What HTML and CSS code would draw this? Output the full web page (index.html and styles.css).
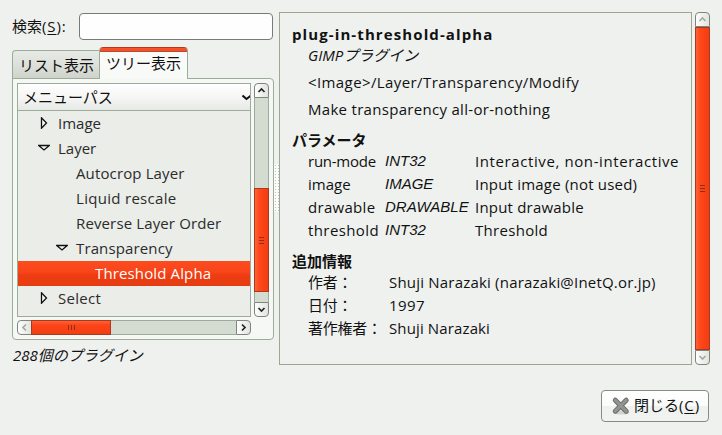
FILE: index.html
```html
<!DOCTYPE html>
<html lang="ja">
<head>
<meta charset="utf-8">
<title>プラグインブラウザ</title>
<link rel="stylesheet" href="styles.css">
</head>
<body>
<main class="panes">
  <section class="left">
    <div class="search"><label for="q">検索<span class="key">(<u>S</u>):</span></label><input id="q" type="text"></div>
    <div class="tabs"><div class="tab">リスト表示</div><div class="tab active">ツリー表示</div></div>
    <div class="page">
      <div class="tree">
        <div class="tree-head"><span>メニューパス</span><svg width="9" height="8"><path d="M0.5 2.5L4.5 6L9 2.5" fill="none" stroke="#111" stroke-width="2"/></svg></div>
        <div class="row l1"><svg width="12" height="12"><path d="M3.5 .8V11.2L8.5 6Z"/></svg><span>Image</span></div>
        <div class="row l1"><svg width="12" height="12"><path d="M.8 3.5H11.2L6 8Z"/></svg><span>Layer</span></div>
        <div class="row l2"><span class="s1">Autocrop Layer</span></div>
        <div class="row l2"><span class="s3">Liquid rescale</span></div>
        <div class="row l2"><span class="s1">Reverse Layer Order</span></div>
        <div class="row l2b"><svg width="12" height="12"><path d="M.8 3.5H11.2L6 8Z"/></svg><span class="s1">Transparency</span></div>
        <div class="row l3 selected"><span class="s1">Threshold Alpha</span></div>
        <div class="row l1"><svg width="12" height="12"><path d="M3.5 .8V11.2L8.5 6Z"/></svg><span class="s3">Select</span></div>
      </div>
      <div class="vbar">
        <div class="btn up"><svg width="9" height="7"><path d="M1.5 5L4.5 2L7.5 5"/></svg></div>
        <div class="trough"><div class="thumb tree-thumb"><i class="grip"></i></div></div>
        <div class="btn down"><svg width="9" height="7"><path d="M1.5 2L4.5 5L7.5 2"/></svg></div>
      </div>
      <div class="hbar">
        <div class="btn prev off"><svg width="7" height="9"><path d="M5 1.5L2 4.5L5 7.5"/></svg></div>
        <div class="trough"><div class="thumb h-thumb"><i class="grip side"></i></div></div>
        <div class="btn next"><svg width="7" height="9"><path d="M2 1.5L5 4.5L2 7.5"/></svg></div>
      </div>
    </div>
    <div class="status">288個のプラグイン</div>
  </section>
  <div class="splitter"><i></i></div>
  <section class="details">
    <h1>plug-in-threshold-alpha</h1>
    <p class="kind">GIMPプラグイン</p>
    <p class="path s4">&lt;Image&gt;/Layer/Transparency/Modify</p>
    <p class="blurb s3">Make transparency all-or-nothing</p>
    <h2>パラメータ</h2>
    <div class="params">
      <span class="tight">run-mode</span><em>INT32</em><span class="s6">Interactive, non-interactive</span>
      <span>image</span><em>IMAGE</em><span class="s2">Input image (not used)</span>
      <span class="s3">drawable</span><em>DRAWABLE</em><span class="s2">Input drawable</span>
      <span class="s4">threshold</span><em>INT32</em><span class="s3">Threshold</span>
    </div>
    <h2 class="extra">追加情報</h2>
    <div class="info">
      <span class="tight">作者：</span><span class="s2">Shuji Narazaki (narazaki@InetQ.or.jp)</span>
      <span class="tight">日付：</span><span class="s4">1997</span>
      <span class="tight">著作権者：</span><span class="s1">Shuji Narazaki</span>
    </div>
  </section>
  <div class="vbar main-bar">
    <div class="btn up off"><svg width="9" height="7"><path d="M1.5 5L4.5 2L7.5 5"/></svg></div>
    <div class="trough"><div class="thumb full"><i class="grip"></i></div></div>
    <div class="btn down off"><svg width="9" height="7"><path d="M1.5 2L4.5 5L7.5 2"/></svg></div>
  </div>
</main>
<footer><button type="button"><svg width="20" height="20" viewBox="0 0 20 20"><ellipse cx="10.5" cy="16.5" rx="8" ry="2" fill="#000" opacity=".12"/><path d="M4.3 4.2L15.2 15.2M15.2 4.2L4.3 15.2" stroke="#666864" stroke-width="5" stroke-linecap="round"/><path d="M4.3 4.2L15.2 15.2M15.2 4.2L4.3 15.2" stroke="#929490" stroke-width="3.2" stroke-linecap="round"/></svg><span class="caption">閉じる<span class="key">(<u>C</u>)</span></span></button></footer>
</body>
</html>
```

FILE: styles.css
```css
* { box-sizing: border-box; }
body { margin: 0; width: 722px; height: 435px; overflow: hidden; background: #eff1ef; color: #111;
  font: 15px/22px "Open Sans", "Noto Sans CJK JP", sans-serif; white-space: nowrap; }
h1, h2, p { margin: 0; font-size: 15px; line-height: 22px; }
u { text-decoration-thickness: 1px; text-underline-offset: 2px; }
svg { display: block; flex: none; }
.s1 { letter-spacing: .13px; }
.s2 { letter-spacing: .2px; }
.s3 { letter-spacing: .3px; }
.s4 { letter-spacing: .4px; }
.s6 { letter-spacing: .6px; }
.tight { letter-spacing: -.25px; }
.key { letter-spacing: .9px; }
.panes { display: flex; padding: 12px 12px 0; height: 370px; }

.left { width: 262px; display: flex; flex-direction: column; }
.search { display: flex; justify-content: space-between; margin-top: 1px; height: 27px; line-height: 26px; }
.search input { width: 194px; height: 27px; border: 1px solid #767b74; border-radius: 4px; background: #fdfefd; padding: 0; margin: 0 1px 0 0; outline: 0; }

.tabs { display: flex; align-items: flex-end; height: 32px; margin-top: 7px; position: relative; z-index: 1; }
.tab { width: 87px; height: 29px; border: 1px solid #9cab9a; border-right: 0; border-radius: 4px 0 0 0; padding-left: 6px; line-height: 29px; background: linear-gradient(#e6e9e4, #dfe2dc 45%, #cfd3cb); }
.tab.active { width: 89px; height: 32px; border: 1px solid #9cab9a; border-bottom: 0; border-top: 0; border-radius: 4px 4px 0 0; padding-left: 6px; line-height: 33px; background: linear-gradient(#b83818 1px, #ff5026 1px, #f44e26 4px, #a9523f 4px, #a9523f 5px, #fafbf9 5px, #f8faf7); }
.page { width: 262px; height: 262px; margin-top: -1px; padding: 4px; border: 1px solid #9cab9a; border-radius: 0 4px 4px 4px; background: #f6f8f5;
  display: grid; grid-template: 234px 15px / 234px 15px; gap: 3px; }
.tree { border: 1px solid #9cab9a; background: #ebede9; overflow: hidden; color: #2a2c29; }
.tree-head { display: flex; align-items: center; justify-content: space-between; height: 27px; padding-left: 5px; border-bottom: 1px solid #9cab9a; background: linear-gradient(#fdfefd, #f6f7f5 50%, #e6e9e5); color: #111; }
.tree-head svg { margin-right: -1px; }
.row { height: 25px; line-height: 25px; display: flex; align-items: center; gap: 8px; }
.row svg { margin-top: -2px; }
.row svg path { fill: #f5f7f4; stroke: #111; stroke-width: 1.3; }
.l1 { padding-left: 20px; }
.l2 { padding-left: 58px; }
.l2b { padding-left: 38px; }
.l3 { padding-left: 77px; }
.selected { background: linear-gradient(#fc4c20, #f84418 45%, #ee3d12 55%, #e63c12); color: #fff; }

.vbar { width: 15px; display: flex; flex-direction: column; }
.hbar { height: 15px; display: flex; }
.btn { flex: none; width: 15px; height: 15px; border: 1px solid #7f857d; background: linear-gradient(90deg, #fdfefd, #e1e4df); display: flex; align-items: center; justify-content: center; }
.btn path { fill: none; stroke: #222; stroke-width: 1.7; }
.btn.off path { stroke: #a3aaa1; }
.up { border-radius: 4px 4px 0 0; }
.down { border-radius: 0 0 4px 4px; }
.prev { border-radius: 4px 0 0 4px; }
.next { border-radius: 0 4px 4px 0; }
.trough { flex: 1; background: #d4dbd0; border: 1px solid #9cab9a; border-width: 0 1px; }
.hbar .trough { border-width: 1px 0; }
.thumb { display: flex; align-items: center; justify-content: center; border: 1px solid #a73a20; background: linear-gradient(90deg, #ff6238, #ff491b 30%, #f33d12); }
.vbar .thumb { width: 15px; margin-left: -1px; }
.tree-thumb { height: 104px; margin-top: 90px; }
.h-thumb { width: 80px; height: 15px; margin-top: -1px; margin-left: -1px; background: linear-gradient(#ff6238, #fc4518 30%, #f33d12); }
.full { height: 100%; }
.grip { width: 5px; height: 7px; background: repeating-linear-gradient(#8a3019 0 1px, transparent 1px 3px); }
.side { width: 7px; height: 5px; background: repeating-linear-gradient(90deg, #8a3019 0 1px, transparent 1px 3px); }
.status { font-style: italic; margin-top: 4px; padding-left: 1px; }

.splitter { width: 5px; padding-top: 152px; }
.splitter i { display: block; height: 48px; background: radial-gradient(circle, #bcc2b9 0 .7px, #fafbfa 1px) 0 0 / 3px 3px; }
.details { width: 413px; height: 353px; padding: 10px 0 0 12px; border: 1px solid #9ca790; }
h1 { letter-spacing: 1.1px; }
.details p { padding-left: 16px; }
.kind { font-style: italic; }
.details .kind { line-height: 21px; }
.path, .blurb { margin-top: 5px; }
h2 { margin-top: 10px; line-height: 20px; }
.params, .info { display: grid; grid-auto-rows: 23px; line-height: 23px; padding-left: 16px; }
.params { grid-template-columns: 77px 90px auto; }
.params em { font-family: "Liberation Sans", sans-serif; line-height: 22px; }
.params span { line-height: 22px; }
.extra { margin-top: 9px; }
.info { grid-template-columns: 81px auto; }
.main-bar { height: 353px; margin-left: 3px; }

footer { display: flex; justify-content: flex-end; padding: 20px 13px 0; }
button { width: 108px; height: 32px; border: 1px solid #858c82; border-radius: 4px; background: linear-gradient(#fff, #fafbfa 50%, #eff1ee 51%, #f1f3f0); font: inherit; color: #111; padding: 0 0 0 9px; display: flex; align-items: center; gap: 3px; }
.caption { line-height: 20px; padding-bottom: 2px; }
```
